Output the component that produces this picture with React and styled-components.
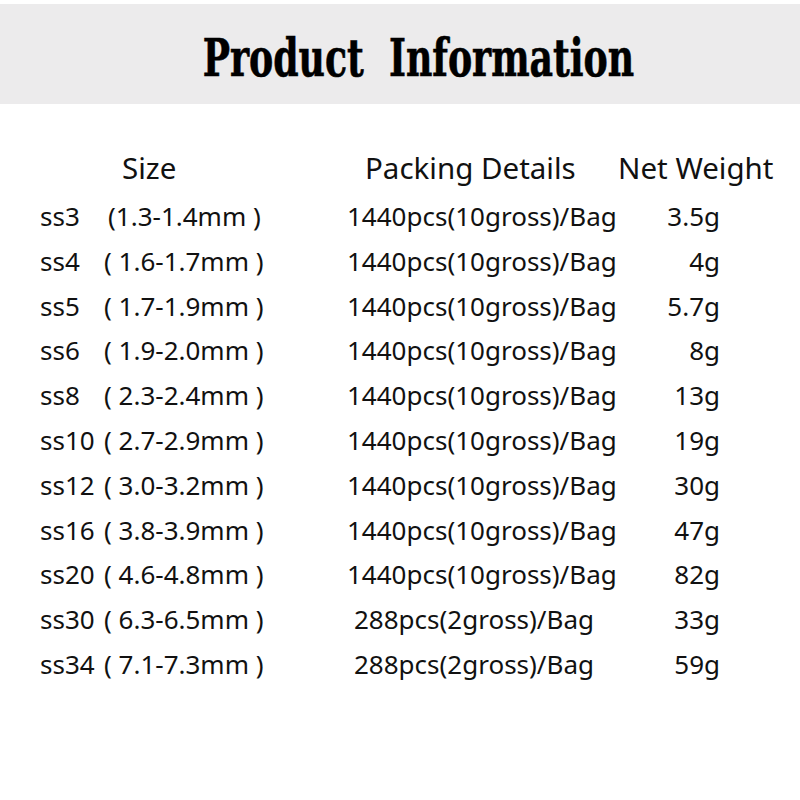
import React from "react";
import styled, { createGlobalStyle } from "styled-components";

const GlobalStyle = createGlobalStyle`
  html, body {
    margin: 0;
    padding: 0;
    background: #ffffff;
  }
`;

const Page = styled.div`
  width: 800px;
  height: 800px;
  padding-top: 4px;
  box-sizing: border-box;
  background: #ffffff;
  color: #111111;
  font-family: "Noto Sans", "Open Sans", sans-serif;
`;

const Banner = styled.div`
  height: 100px;
  box-sizing: border-box;
  padding-top: 28px;
  padding-left: 36px;
  background: #ecebec;
  display: flex;
  justify-content: center;
`;

const Title = styled.h1`
  margin: 0;
  font-family: "DejaVu Serif", "Liberation Serif", serif;
  font-stretch: condensed;
  font-weight: 700;
  font-size: 52px;
  line-height: 1;
  color: #000000;
  white-space: pre;
  -webkit-text-stroke: 0.6px #000000;
  transform: scaleX(0.775);
  transform-origin: center top;
`;

const HeaderRow = styled.div`
  display: grid;
  grid-template-columns: 243px 253px 1fr;
  padding-left: 122px;
  margin-top: 44px;
  font-size: 29.5px;
  line-height: 40px;
`;

const HeaderCell = styled.div`
  white-space: nowrap;
`;

const Table = styled.div`
  display: grid;
  grid-template-columns: 64px 243px 268px 105px;
  grid-auto-rows: 44.8px;
  padding-left: 40px;
  margin-top: 6px;
  font-size: 26px;
  line-height: 44.8px;
`;

const Cell = styled.div`
  white-space: nowrap;
  padding-left: ${(p) => p.$indent || 0}px;
  text-align: ${(p) => (p.$right ? "right" : "left")};
`;

const rows = [
  ["ss3", "(1.3-1.4mm )", "1440pcs(10gross)/Bag", "3.5g", 4, 0],
  ["ss4", "( 1.6-1.7mm )", "1440pcs(10gross)/Bag", "4g", 0, 0],
  ["ss5", "( 1.7-1.9mm )", "1440pcs(10gross)/Bag", "5.7g", 0, 0],
  ["ss6", "( 1.9-2.0mm )", "1440pcs(10gross)/Bag", "8g", 0, 0],
  ["ss8", "( 2.3-2.4mm )", "1440pcs(10gross)/Bag", "13g", 0, 0],
  ["ss10", "( 2.7-2.9mm )", "1440pcs(10gross)/Bag", "19g", -3, -2],
  ["ss12", "( 3.0-3.2mm )", "1440pcs(10gross)/Bag", "30g", 0, 0],
  ["ss16", "( 3.8-3.9mm )", "1440pcs(10gross)/Bag", "47g", 0, 0],
  ["ss20", "( 4.6-4.8mm )", "1440pcs(10gross)/Bag", "82g", 0, 0],
  ["ss30", "( 6.3-6.5mm )", "288pcs(2gross)/Bag", "33g", 0, 7],
  ["ss34", "( 7.1-7.3mm )", "288pcs(2gross)/Bag", "59g", 0, 7],
];

export default function App() {
  return (
    <>
      <GlobalStyle />
      <Page>
        <Banner>
          <Title>{"Product  Information"}</Title>
        </Banner>
        <HeaderRow>
          <HeaderCell>Size</HeaderCell>
          <HeaderCell>Packing Details</HeaderCell>
          <HeaderCell>Net Weight</HeaderCell>
        </HeaderRow>
        <Table>
          {rows.map(([code, range, pack, weight, rangeIndent, packIndent]) => (
            <React.Fragment key={code}>
              <Cell>{code}</Cell>
              <Cell $indent={rangeIndent}>{range}</Cell>
              <Cell $indent={packIndent}>{pack}</Cell>
              <Cell $right>{weight}</Cell>
            </React.Fragment>
          ))}
        </Table>
      </Page>
    </>
  );
}
